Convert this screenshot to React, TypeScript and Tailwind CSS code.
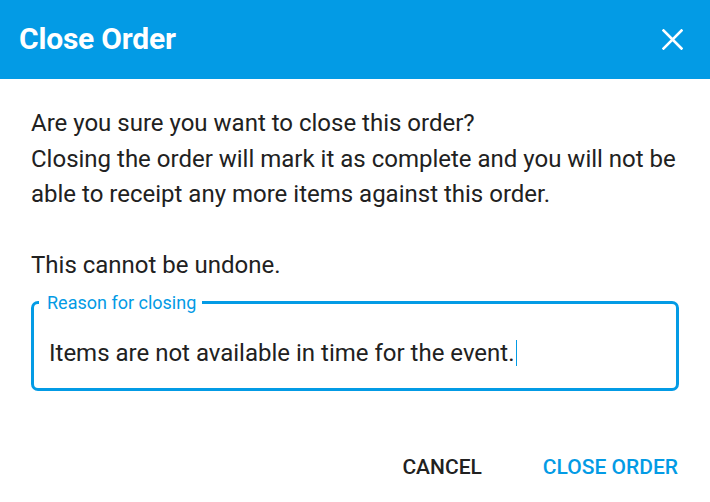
export default function App() {
  return (
    <div className="w-[710px] h-[502px] bg-white font-['Roboto',sans-serif] overflow-hidden">
      <div className="h-[79px] bg-[#039be5] flex items-center justify-between pl-[19px] pr-[27px]">
        <h1 className="text-white text-[30px] font-bold tracking-[-0.2px] -mt-[2px]">Close Order</h1>
        <svg width="21" height="21" viewBox="0 0 21 21" className="-mt-[1px]">
          <path d="M1.5 1.5 L19.5 19.5 M19.5 1.5 L1.5 19.5" stroke="white" strokeWidth="2.6" strokeLinecap="square" />
        </svg>
      </div>
      <div className="pt-[27px] px-[31px] text-[#212121] text-[24px] leading-[35.5px]">
        <p>Are you sure you want to close this order?</p>
        <p>Closing the order will mark it as complete and you will not be able to receipt any more items against this order.</p>
        <p className="mt-[35.5px]">This cannot be undone.</p>
        <fieldset className="mt-[10px] border-[3px] border-[#039be5] rounded-[7px] h-[97px] pl-[15px] pr-[15px] pb-0">
          <legend className="text-[18px] leading-[18px] text-[#039be5] pl-[8px] pr-[6px] -ml-[10px]">Reason for closing</legend>
          <div className="flex items-center mt-[27px] leading-[28px]">
            <span>Items are not available in time for the event.</span>
            <span className="w-px h-[26px] bg-[#039be5] ml-px" />
          </div>
        </fieldset>
      </div>
      <div className="flex justify-end items-center gap-[61px] pr-[32px] mt-[61px] text-[21px] font-medium">
        <button className="text-[#212121]">CANCEL</button>
        <button className="text-[#039be5]">CLOSE ORDER</button>
      </div>
    </div>
  );
}
